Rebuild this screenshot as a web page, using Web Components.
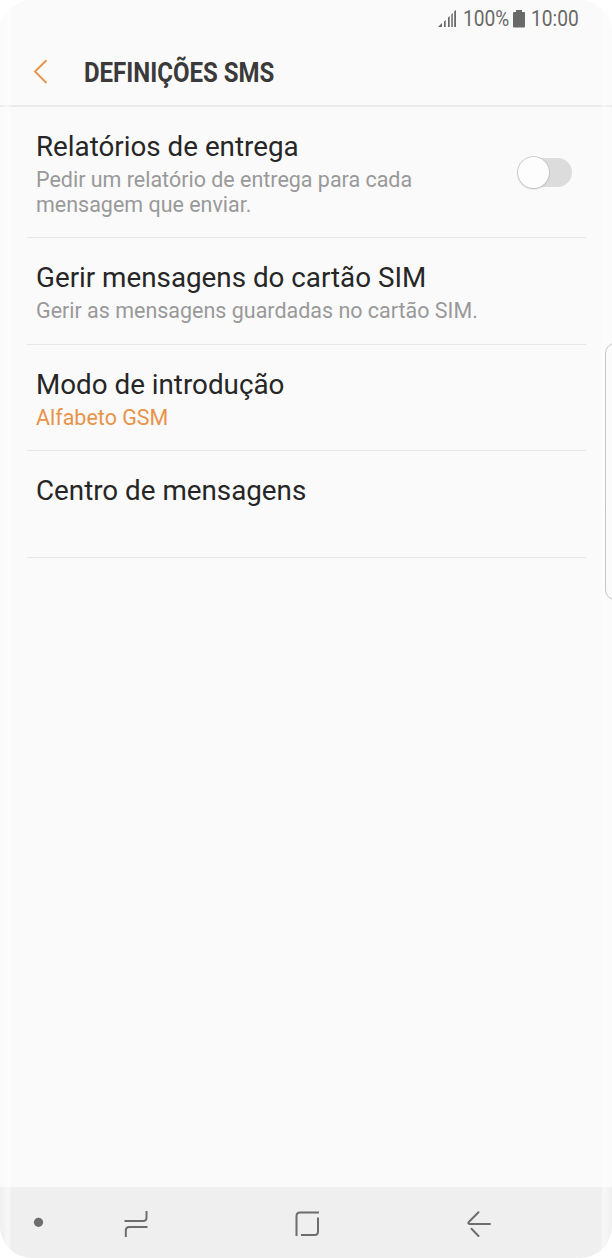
<!DOCTYPE html>
<html lang="pt">
<head>
<meta charset="utf-8">
<title>Definições SMS</title>
<style>
html,body{margin:0;background:#fff}
body{font-family:Roboto,"Liberation Sans",sans-serif;width:612px;height:1258px;overflow:hidden}
</style>
</head>
<body>
<phone-screen>
  <status-bar slot="status"></status-bar>
  <title-bar slot="header">DEFINIÇÕES SMS</title-bar>
  <setting-row style="--h:130px">Relatórios de entrega<span slot="desc">Pedir um relatório de entrega para cada<br>mensagem que enviar.</span><toggle-switch slot="control"></toggle-switch></setting-row>
  <setting-row style="--h:106px">Gerir mensagens do cartão SIM<span slot="desc">Gerir as mensagens guardadas no cartão SIM.</span></setting-row>
  <setting-row style="--h:105px;--desc:#e8934a">Modo de introdução<span slot="desc">Alfabeto GSM</span></setting-row>
  <setting-row style="--h:106px">Centro de mensagens</setting-row>
  <nav-bar slot="nav"></nav-bar>
</phone-screen>
<script>
const define = (name, html) => customElements.define(name, class extends HTMLElement {
  constructor() {
    super();
    const t = document.createElement('template');
    t.innerHTML = html;
    this.attachShadow({mode: 'open'}).append(t.content.cloneNode(true));
  }
});

define('phone-screen', `<style>
:host{display:flex;flex-direction:column;position:relative;width:612px;height:1258px;box-sizing:border-box;border-radius:32px;overflow:hidden;background:#fafafa}
main{flex:1;min-height:0;padding:0 26px 0 27px}
.edge{position:absolute;top:0;bottom:0;width:11px;pointer-events:none}
.l{left:0;background:linear-gradient(90deg,#fff0,#ffffff80 70%,#ffffff40)}
.r{right:0;background:linear-gradient(270deg,#fff0,#ffffff80 70%,#ffffff40)}
.handle{position:absolute;left:605px;top:343px;width:24px;height:255px;border:1px solid #c6c6c6;border-radius:10px;background:#fbfbfb}
</style><slot name="status"></slot><slot name="header"></slot><main><slot></slot></main><slot name="nav"></slot>
<div class="edge l"></div><div class="edge r"></div><div class="handle"></div>`);

define('status-bar', `<style>
:host{display:flex;height:38px;box-sizing:border-box;padding:0 33px 0 0;justify-content:flex-end;align-items:center;color:#696969;font-size:22px;line-height:38px}
svg{display:block;flex:none}
span{display:flex;flex:none;white-space:nowrap}
b{font-weight:400;transform:scaleX(.87);transform-origin:0 50%}
.p{width:46px;margin-left:6px}.t{width:48px;margin-left:6px}
</style>
<svg style="margin-right:-1px;transform:translateX(-1px)" width="19" height="18" viewBox="0 0 19 18" fill="#696969"><path d="M0 17 4 13V17ZM6 11.500 7.700 10V17H6ZM10 7.500 11.700 6V17H10ZM13.300 4.200 14.800 3V17h-1.500ZM16.200 1.200 18 0V17h-1.800Z"/></svg>
<span class="p"><b>100%</b></span>
<svg style="margin-left:4px" width="12" height="18" viewBox="0 0 12 18" fill="#696969"><path d="M3 0h6v2h2q1 0 1 1v13.500q0 1-1 1H1q-1 0-1-1V3q0-1 1-1h2Z"/></svg>
<span class="t"><b>10:00</b></span>`);

define('title-bar', `<style>
:host{display:flex;height:69px;box-sizing:border-box;border-bottom:2px solid #ebebeb;align-items:center;padding-left:33px;color:#3a3a3a;font-size:28px;font-weight:700}
svg{display:block;margin-right:35.5px}
span{white-space:nowrap;padding-top:2px;transform:scaleX(.857);transform-origin:0 50%}
</style><svg width="15" height="25" viewBox="0 0 15 25" fill="none" stroke="#e8934a" stroke-width="1.9"><path d="M13.500 1.200 2 12.500 13.500 24"/></svg><span><slot></slot></span>`);

define('setting-row', `<style>
:host{display:flex;height:var(--h);border-bottom:1px solid #e7e7e7;padding:0 14px 0 9px;align-items:flex-start}
section{flex:1;padding-top:23px;white-space:nowrap}
h2,p{transform-origin:0 50%}
h2{margin:0;font-size:28px;line-height:33px;font-weight:400;color:#262626;transform:scaleX(.992)}
p{margin:4px 0 0;font-size:22px;line-height:25px;color:var(--desc,#999);transform:scaleX(.976)}
</style><section><h2><slot></slot></h2><p><slot name="desc"></slot></p></section><slot name="control"></slot>`);

define('toggle-switch', `<style>
:host{display:flex;align-items:center;width:54px;height:29px;margin-top:51px;border-radius:15px;background:#dcdcdc}
i{width:31px;height:31px;flex:none;margin:-1px 0 0 -.5px;border-radius:50%;background:#fdfdfd;box-shadow:0 0 0 .8px #c2c2c2,0 1px 1.5px #9999}
</style><i></i>`);

define('nav-bar', `<style>
:host{display:flex;height:71px;align-items:center;background:#efefef}
svg{display:block}
</style><svg width="612" height="71" viewBox="0 1187 612 71" fill="none" stroke="#6d6d6d" stroke-width="2"><circle cx="38.500" cy="1222.300" r="4.600" fill="#6d6d6d" stroke="none"/>
<path d="M124.500 1221H143q3.500 0 3.500-3.500V1211M125.800 1237v-6.500q0-3.500 3.500-3.500H147.500M296.500 1236v-20q0-3.500 3.500-3.500h19M318 1217.500v14q0 3.500-3.500 3.500H301"/>
<path stroke-linecap="round" stroke-linejoin="round" d="M478.500 1212.300 468.800 1222q-1.300 1.900.8 2H490M471.500 1228.800 478.500 1236"/></svg>`);
</script>
</body>
</html>
